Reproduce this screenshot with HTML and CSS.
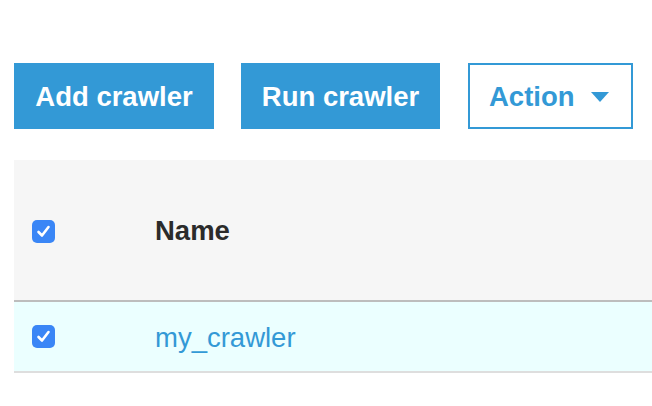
FILE: index.html
```html
<!DOCTYPE html>
<html>
<head>
<meta charset="utf-8">
<link rel="stylesheet" href="styles.css">
</head>
<body>
<div class="page">
  <div class="toolbar">
    <button class="btn btn-primary btn-add">Add crawler</button>
    <button class="btn btn-primary btn-run">Run crawler</button>
    <button class="btn btn-outline btn-action">Action <svg class="caret" width="18" height="10" viewBox="0 0 18 10"><path d="M0 0H18L9 10Z" fill="#3399d6"/></svg></button>
  </div>
  <div class="table">
    <div class="thead">
      <div class="cell-check"><span class="checkbox"><svg width="23" height="23" viewBox="0 0 23 23"><rect width="23" height="23" rx="5" fill="#3a86f6"/><path d="M6.5 12 L10 15.5 L16.5 7" fill="none" stroke="#fff" stroke-width="2.6" stroke-linecap="round" stroke-linejoin="round"/></svg></span></div>
      <div class="cell-name th">Name</div>
    </div>
    <div class="trow">
      <div class="cell-check"><span class="checkbox"><svg width="23" height="23" viewBox="0 0 23 23"><rect width="23" height="23" rx="5" fill="#3a86f6"/><path d="M6.5 12 L10 15.5 L16.5 7" fill="none" stroke="#fff" stroke-width="2.6" stroke-linecap="round" stroke-linejoin="round"/></svg></span></div>
      <div class="cell-name"><a class="link">my_crawler</a></div>
    </div>
  </div>
</div>
</body>
</html>
```
FILE: styles.css
```css
html, body {
  margin: 0;
  padding: 0;
  background: #ffffff;
  font-family: "Liberation Sans", Arial, Helvetica, sans-serif;
}
.page {
  padding: 63px 0 0 14px;
}
.toolbar {
  display: flex;
  align-items: stretch;
  height: 66px;
}
.btn {
  font-family: inherit;
  font-size: 27.5px;
  font-weight: bold;
  border: none;
  margin: 0;
  padding: 2px 0 0 0;
  height: 66px;
  display: flex;
  align-items: center;
  justify-content: center;
  box-sizing: border-box;
  cursor: pointer;
}
.btn-primary {
  background: #3399d6;
  color: #ffffff;
}
.btn-add {
  width: 200px;
}
.btn-run {
  width: 199px;
  margin-left: 27px;
}
.btn-outline {
  background: #ffffff;
  color: #3399d6;
  border: 2px solid #3399d6;
}
.btn-action {
  width: 165px;
  margin-left: 28px;
  justify-content: flex-start;
  padding-left: 19px;
}
.caret {
  margin-left: 16px;
  margin-top: -1px;
}
.table {
  margin-top: 31px;
}
.thead {
  display: flex;
  align-items: center;
  height: 140px;
  background: #f6f6f6;
  border-bottom: 2px solid #bdbdbd;
}
.trow {
  display: flex;
  align-items: center;
  height: 69px;
  background: #ebffff;
  border-bottom: 2px solid #dedede;
}
.cell-check {
  width: 141px;
  padding-left: 18px;
  box-sizing: border-box;
  display: flex;
  align-items: center;
}
.thead .cell-check {
  margin-top: 3px;
}
.checkbox {
  display: block;
  width: 23px;
  height: 23px;
}
.checkbox svg {
  display: block;
}
.cell-name {
  font-size: 27.5px;
}
.thead .cell-name {
  margin-top: 2px;
}
.trow .cell-name {
  margin-top: 3px;
}
.th {
  font-weight: bold;
  color: #2b2b2b;
}
.link {
  color: #3399d6;
  text-decoration: none;
}
```
